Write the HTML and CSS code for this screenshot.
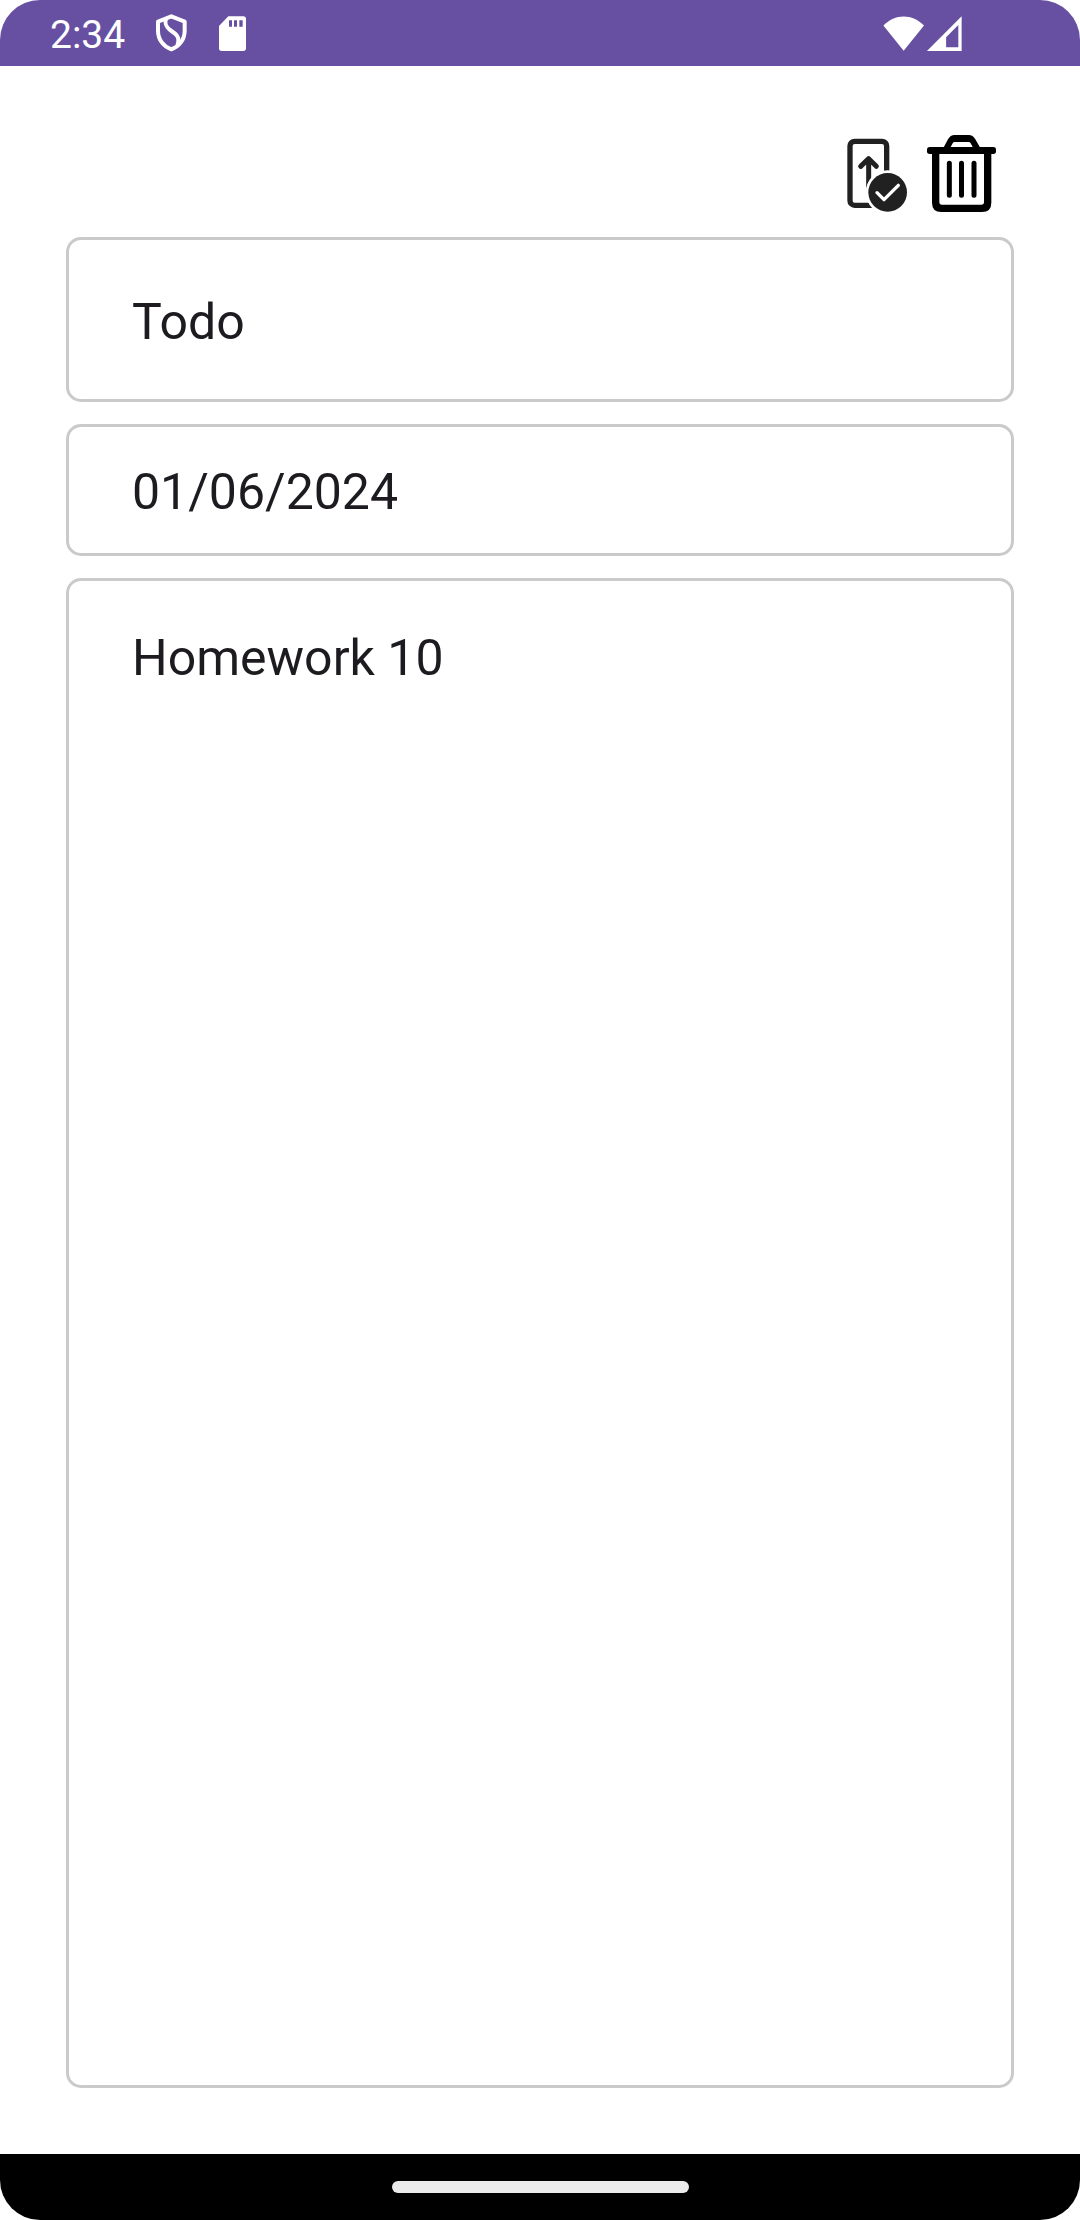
FILE: index.html
```html
<!DOCTYPE html>
<html lang="en">
<head>
<meta charset="utf-8">
<meta name="viewport" content="width=device-width, initial-scale=1">
<title>Todo</title>
<link rel="stylesheet" href="styles.css">
</head>
<body>
<div class="screen">
  <header class="status-bar">
    <time class="clock">2:34</time>
    <svg class="shield" viewBox="468 44 93 114" aria-hidden="true">
      <path d="M514 51 L554 67 V94 C554 121 537 142 514 150 C491 142 474 121 474 94 V67 Z" fill="none" stroke="#fff" stroke-width="12" stroke-linejoin="round"/>
      <path d="M498 58 C494 72 496 80 509 91 C528 104 542 112 532 138" fill="none" stroke="#fff" stroke-width="12"/>
    </svg>
    <svg class="card" viewBox="657 47 81 105" aria-hidden="true">
      <path fill="#fff" fill-rule="evenodd" d="M685 48 H730 Q738 48 738 56 V144 Q738 152 730 152 H665 Q657 152 657 144 V77 Z M687 60 V79 H696 V60 Z M702 60 V79 H711 V60 Z M718 60 V79 H728 V60 Z"/>
    </svg>
    <svg class="signal" viewBox="129 44 237 106" aria-hidden="true">
      <path fill="#fff" d="M129 73 C164 36 217 36 252 73 L190.500 149 Z"/>
      <path fill="#fff" fill-rule="evenodd" d="M366 45 V150 H261 Z M356 71 L319 108 V139 H356 Z"/>
    </svg>
  </header>

  <main class="editor">
    <div class="actions">
      <button class="action save" type="button" aria-label="Save">
        <svg viewBox="51 45 180 231" aria-hidden="true">
          <rect x="60" y="64" width="110" height="192" rx="14" fill="none" stroke="#212121" stroke-width="16"/>
          <path d="M116 204 V116 M92 139 L116 116 L139 139" fill="none" stroke="#212121" stroke-width="15" stroke-linecap="round" stroke-linejoin="round"/>
          <circle cx="173" cy="217" r="66" fill="#fff"/>
          <circle cx="173" cy="217" r="58" fill="#212121"/>
          <path d="M141 218 L162 239 L205 196" fill="none" stroke="#fff" stroke-width="10" stroke-linecap="round" stroke-linejoin="round"/>
        </svg>
      </button>
      <button class="action delete" type="button" aria-label="Delete">
        <svg viewBox="291 45 207 231" aria-hidden="true">
          <path d="M306 100 H328 V246 Q328 254 336 254 H454 Q462 254 462 246 V100 H484 V248 Q484 276 456 276 H334 Q306 276 306 248 Z"/>
          <rect x="291" y="81" width="207" height="21" rx="8"/>
          <path fill-rule="evenodd" d="M340 84 L354 58 Q361 45 374 45 H416 Q429 45 436 58 L451 84 Z M362 81 H428 L422 70 Q420 66 416 66 H374 Q370 66 368 70 Z"/>
          <path d="M358 130 V226 M394.500 130 V226 M432 130 V226" stroke="#000" stroke-width="15" stroke-linecap="round"/>
        </svg>
      </button>
    </div>
    <form class="fields">
      <input class="field title" type="text" aria-label="Title" value="Todo">
      <input class="field date" type="text" aria-label="Date" value="01/06/2024">
      <textarea class="field note" aria-label="Note">Homework 10</textarea>
    </form>
  </main>

  <footer class="nav-bar"><div class="handle"></div></footer>
</div>
</body>
</html>
```
FILE: styles.css
```css
* {
  box-sizing: border-box;
}

body {
  margin: 0;
  background: #fff;
  font-family: Roboto, sans-serif;
}

svg {
  display: block;
}

.screen {
  display: flex;
  flex-direction: column;
  min-height: 100vh;
}

.status-bar {
  display: flex;
  align-items: center;
  height: 66px;
  padding: 0 118px 0 50px;
  border-radius: 40px 40px 0 0;
  background: #6750a2;
  color: #fff;
}

.clock {
  padding-top: 3px;
  font-size: 39px;
  line-height: 46px;
}

.shield {
  width: 31px;
  height: 38px;
  margin-left: 31px;
}

.card {
  width: 27px;
  height: 35px;
  margin-left: 32px;
}

.signal {
  width: 79px;
  height: 35px;
  margin-left: auto;
}

.editor {
  display: flex;
  flex: 1;
  flex-direction: column;
  padding: 69px 66px 66px;
}

.actions {
  display: flex;
  justify-content: flex-end;
  gap: 20px;
  padding: 0 18px 25px 0;
}

.action {
  padding: 0;
  border: 0;
  background: none;
}

.save svg {
  width: 60px;
  height: 77px;
}

.delete svg {
  width: 69px;
  height: 77px;
}

.fields {
  display: flex;
  flex: 1;
  flex-direction: column;
  gap: 22px;
}

.field {
  display: block;
  width: 100%;
  margin: 0;
  padding: 4px 63px 0;
  border: 3px solid #cacaca;
  border-radius: 15px;
  outline: 0;
  background: #fff;
  color: #1d1b20;
  font-family: inherit;
  font-size: 50px;
  line-height: 60px;
}

.title {
  height: 165px;
}

.date {
  height: 132px;
}

.note {
  flex: 1;
  padding-top: 47px;
  resize: none;
}

.nav-bar {
  display: flex;
  align-items: center;
  justify-content: center;
  height: 66px;
  border-radius: 0 0 40px 40px;
  background: #000;
}

.handle {
  width: 297px;
  height: 12px;
  border-radius: 6px;
  background: #ebebeb;
}
```
